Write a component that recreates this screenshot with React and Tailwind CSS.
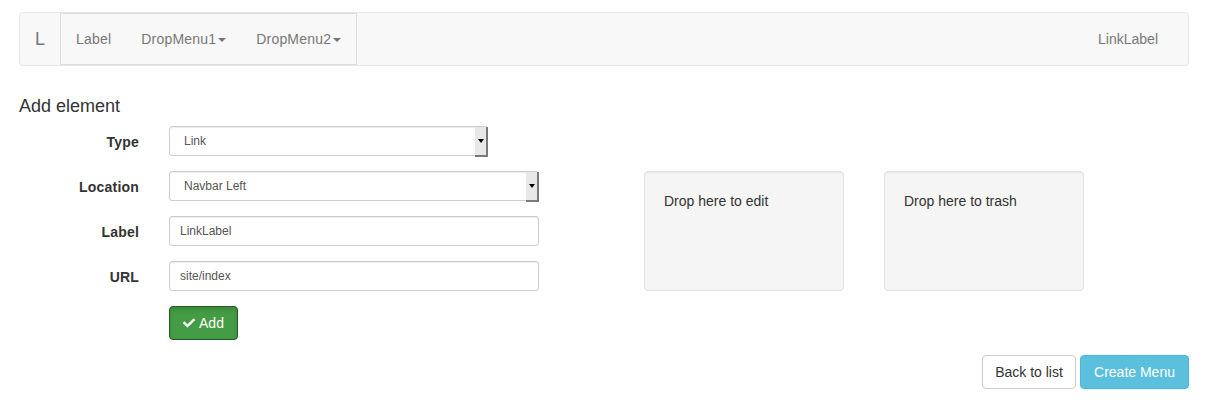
import React from "react";
import { FaCheck } from "react-icons/fa";

function Caret() {
  return (
    <span className="ml-[2px] inline-block h-0 w-0 border-x-[4px] border-t-[4px] border-x-transparent border-t-[#777] align-middle" />
  );
}

function FakeSelect({ value, width }) {
  return (
    <div
      className={`relative flex h-[30px] items-center rounded-[3px] border border-[#ccc] bg-white pl-[14px] text-[12px] text-[#555] shadow-[inset_0_1px_1px_rgba(0,0,0,0.075)] ${width}`}
    >
      <span>{value}</span>
      <div className="absolute right-[-1px] top-0 flex h-[30px] w-[13px] items-center justify-center border-b-2 border-r-2 border-[#7a7a7a] bg-[#e8e8e8]">
        <span className="inline-block h-0 w-0 border-x-[3px] border-t-[4px] border-x-transparent border-t-black" />
      </div>
    </div>
  );
}

function TextInput({ value }) {
  return (
    <div className="flex h-[30px] w-[370px] items-center rounded-[3px] border border-[#ccc] bg-white pl-[10px] text-[12px] text-[#555] shadow-[inset_0_1px_1px_rgba(0,0,0,0.075)]">
      {value}
    </div>
  );
}

function Row({ label, children }) {
  return (
    <div className="flex items-center">
      <div className="mt-[2px] w-[120px] text-right text-[14px] font-bold tracking-[0.2px] text-[#333]">{label}</div>
      <div className="ml-[30px]">{children}</div>
    </div>
  );
}

export default function App() {
  return (
    <div
      className="min-h-[417px] bg-white pl-[19px] pr-[26px] pt-[12px] text-[14px] text-[#333]"
      style={{ fontFamily: '"Liberation Sans", Arial, sans-serif' }}
    >
      {/* Navbar */}
      <div className="flex h-[54px] items-stretch rounded-[4px] border border-[#e7e7e7] bg-[#f8f8f8]">
        <div className="flex w-[40px] items-center justify-center text-[18px] text-[#777]">L</div>
        <ul className="flex items-center border border-[#ddd] px-0 tracking-[0.2px]">
          <li className="px-[15px] text-[#777]">Label</li>
          <li className="px-[15px] text-[#777]">
            DropMenu1
            <Caret />
          </li>
          <li className="px-[15px] text-[#777]">
            DropMenu2
            <Caret />
          </li>
        </ul>
        <div className="flex-1" />
        <div className="flex items-center pr-[30px] text-[#777]">LinkLabel</div>
      </div>

      <h4 className="mt-[30px] mb-[10px] text-[18px] leading-[20px] text-[#333]">Add element</h4>

      <div className="flex">
        <div className="flex w-[625px] flex-col gap-[15px]">
          <Row label="Type">
            <FakeSelect value="Link" width="w-[319px]" />
          </Row>
          <Row label="Location">
            <FakeSelect value="Navbar Left" width="w-[370px]" />
          </Row>
          <Row label="Label">
            <TextInput value="LinkLabel" />
          </Row>
          <Row label="URL">
            <TextInput value="site/index" />
          </Row>
          <div className="ml-[150px]">
            <button className="flex h-[34px] w-[69px] items-center justify-center gap-[4px] rounded-[4px] border border-[#255625] bg-[#449d44] text-[14px] text-white shadow-[inset_0_3px_5px_rgba(0,0,0,0.125)]">
              <FaCheck className="h-[12px] w-[12px]" />
              Add
            </button>
          </div>
        </div>
        <div className="mt-[45px] flex gap-[40px]">
          <div className="h-[120px] w-[200px] rounded-[4px] border border-[#e3e3e3] bg-[#f5f5f5] p-[19px] leading-[20px] shadow-[inset_0_1px_1px_rgba(0,0,0,0.05)]">
            Drop here to edit
          </div>
          <div className="h-[120px] w-[200px] rounded-[4px] border border-[#e3e3e3] bg-[#f5f5f5] p-[19px] leading-[20px] shadow-[inset_0_1px_1px_rgba(0,0,0,0.05)]">
            Drop here to trash
          </div>
        </div>
      </div>

      <div className="mt-[15px] flex justify-end gap-[4px]">
        <button className="h-[34px] w-[94px] rounded-[4px] border border-[#ccc] bg-white text-[14px] text-[#333]">
          Back to list
        </button>
        <button className="h-[34px] w-[109px] rounded-[4px] border border-[#46b8da] bg-[#5bc0de] text-[14px] text-white">
          Create Menu
        </button>
      </div>
    </div>
  );
}
